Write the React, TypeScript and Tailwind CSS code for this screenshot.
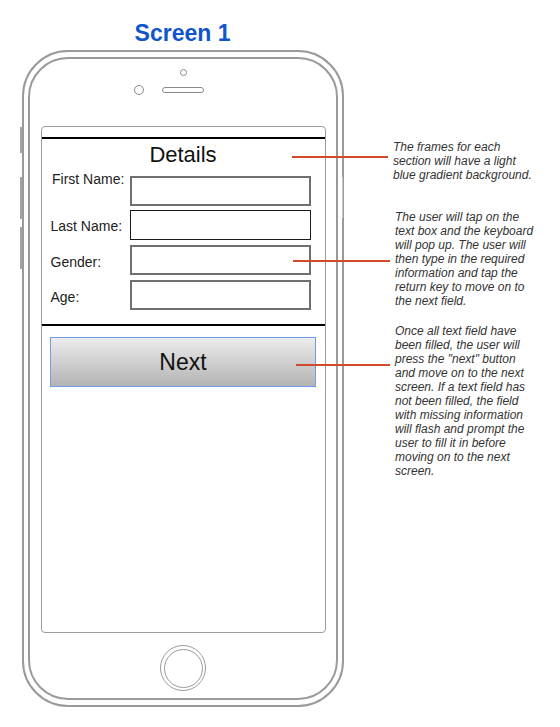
const fields = [
  { label: 'First Name:', row: 'mt-[8px] items-start', labelCls: '-mt-[5px] pl-[1.5px]', box: 'border-2 border-[#707070]' },
  { label: 'Last Name:', row: 'mt-[4px] items-center', labelCls: 'pt-[1px]', box: 'border-[1.5px] border-[#1a1a1a]' },
  { label: 'Gender:', row: 'mt-[5px] items-center', labelCls: 'pt-[4px]', box: 'border-2 border-[#707070]' },
  { label: 'Age:', row: 'mt-[5px] items-center', labelCls: 'pt-[3px]', box: 'border-2 border-[#707070]' },
];

function Screen() {
  return (
    <div className="mt-[31px] flex h-[507px] w-[285px] flex-col rounded-[4px] border-[1.5px] border-[#9b9b9b]">
      <div className="h-[10px]" />
      <div className="h-[2px] bg-black" />
      <div className="mt-[3px] text-center text-[22px] leading-[26px] text-[#111]">Details</div>

      <div className="flex flex-col pl-[9px]">
        {fields.map((f) => (
          <div key={f.label} className={`flex ${f.row}`}>
            <span className={`w-[79.5px] text-[14px] leading-[16px] text-[#222] ${f.labelCls}`}>{f.label}</span>
            <div className={`h-[30px] w-[181px] ${f.box}`} />
          </div>
        ))}
      </div>

      <div className="mt-[14px] h-[2px] bg-black" />

      <button className="mx-[8.5px] mt-[11px] flex h-[50px] items-center justify-center border-[1.5px] border-[#6d9eeb] bg-gradient-to-b from-[#ececec] to-[#b4b4b4] text-[23px] text-[#111]">
        Next
      </button>
    </div>
  );
}

function Phone() {
  return (
    <div className="relative ml-[22px] flex h-[657px] w-[322px] shrink-0 rounded-[46px] border-2 border-[#9a9a9a] px-[4px] py-[5px]">
      {/* side buttons */}
      <div className="absolute left-[-4px] top-[75px] h-[26px] w-[2px] bg-[#a3a3a3]" />
      <div className="absolute left-[-4px] top-[125px] h-[42px] w-[2px] bg-[#a3a3a3]" />
      <div className="absolute left-[-4px] top-[175px] h-[42px] w-[2px] bg-[#a3a3a3]" />
      <div className="absolute right-[-1px] top-[125px] h-[41px] w-[1px] bg-[#c8c8c8]" />

      <div className="flex flex-1 flex-col items-center rounded-[40px] border-2 border-[#9a9a9a]">
        <div className="mt-[10px] h-[7px] w-[7px] rounded-full border-[1.5px] border-[#8a8a8a]" />
        <div className="mt-[9px] flex h-[10px] items-center gap-[18px]">
          <div className="h-[10px] w-[10px] rounded-full border-[1.5px] border-[#8a8a8a]" />
          <div className="h-[6px] w-[42px] rounded-full border-[1.5px] border-[#8a8a8a]" />
          <div className="w-[10px]" />
        </div>

        <Screen />

        <div className="mt-[12px] flex h-[46px] w-[46px] items-center justify-center rounded-full border-[1.5px] border-[#9a9a9a]">
          <div className="h-[39px] w-[39px] rounded-full border-[1.5px] border-[#9a9a9a]" />
        </div>
      </div>
    </div>
  );
}

export default function App() {
  return (
    <div className="relative h-[727px] w-[560px] overflow-hidden bg-white font-['Liberation_Sans',Arial,sans-serif]">
      <h1 className="w-[365px] pt-[20px] text-center text-[23px] font-bold leading-[26px] text-[#1155cc]">Screen 1</h1>

      <div className="mt-[4px] flex">
        <Phone />

        <div className="ml-[49px] flex flex-col whitespace-nowrap text-[12px] italic leading-[14px] text-[#333]">
          <p className="mt-[90px]">
            The frames for each
            <br />
            section will have a light
            <br />
            blue gradient background.
          </p>
          <p className="ml-[2px] mt-[28px]">
            The user will tap on the
            <br />
            text box and the keyboard
            <br />
            will pop up. The user will
            <br />
            then type in the required
            <br />
            information and tap the
            <br />
            return key to move on to
            <br />
            the next field.
          </p>
          <p className="ml-[2px] mt-[16px]">
            Once all text field have
            <br />
            been filled, the user will
            <br />
            press the "next" button
            <br />
            and move on to the next
            <br />
            screen. If a text field has
            <br />
            not been filled, the field
            <br />
            with missing information
            <br />
            will flash and prompt the
            <br />
            user to fill it in before
            <br />
            moving on to the next
            <br />
            screen.
          </p>
        </div>
      </div>

      {/* callout lines */}
      <div className="absolute left-[292px] top-[156px] z-10 h-[2px] w-[96px] bg-[#d24a2c]" />
      <div className="absolute left-[293px] top-[260px] z-10 h-[2px] w-[97px] bg-[#d24a2c]" />
      <div className="absolute left-[296px] top-[364px] z-10 h-[2px] w-[94px] bg-[#d24a2c]" />
    </div>
  );
}
